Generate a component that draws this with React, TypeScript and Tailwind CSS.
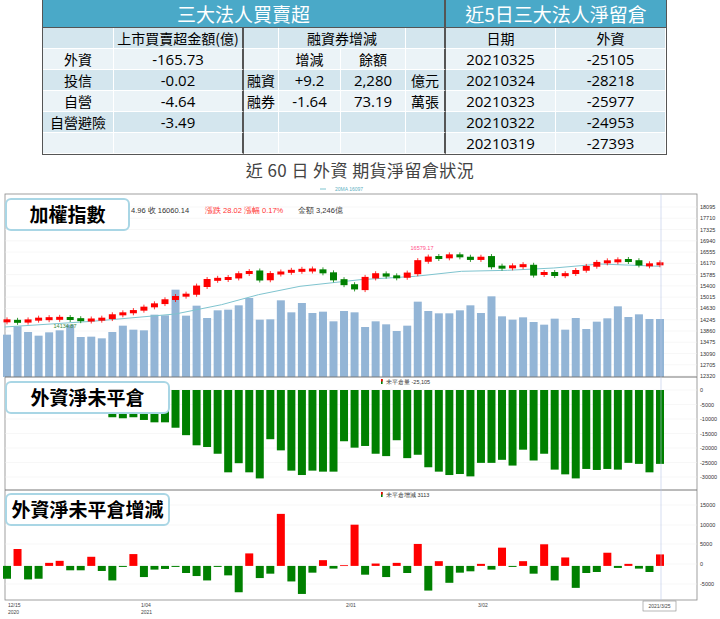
import React from "react";

const N = 63;
const X0 = 7, X1 = 660;
const sp = (X1 - X0) / (N - 1);
const xi = (i: number) => X0 + i * sp;

const volTop = [455,430,447,458,448,442,425,462,461,466,447,428,440,442,395,397,320,398,368,405,382,380,367,345,410,409,352,388,360,390,386,415,384,388,432,415,424,444,428,356,384,391,391,382,367,390,340,400,410,403,417,425,407,440,405,438,416,406,370,402,394,408,408];
const closes = [412,418,410,407,407,405,408,412,410,407,395,390,382,372,362,350,340,333,310,290,288,285,272,265,290,272,268,262,262,260,270,290,305,318,285,272,280,283,270,235,222,225,215,222,230,222,250,255,248,248,275,268,278,272,262,250,238,235,232,233,246,245,240];
const p2 = [0,0,0,0,0,0,0,0,0,0,57,60,57,65,72,72,88,110,140,145,165,220,193,220,238,122,155,215,228,215,218,218,128,147,142,165,172,125,178,168,205,218,228,225,232,192,192,183,200,153,185,165,212,226,238,210,213,210,212,192,195,220,195];
const p3 = [535,447,537,535,488,482,510,510,470,512,540,500,462,530,508,506,500,518,527,540,500,525,575,460,533,520,343,543,580,517,480,505,495,375,523,490,530,488,518,432,570,483,547,517,513,491,508,443,500,483,520,433,540,472,562,518,515,458,503,491,505,515,463];

const ax1 = ["18095","17710","17325","16940","16555","16170","15785","15400","15015","14630","14245","13860","13475","13090","12705","12320"];

function Chart() {
  const RED = "#ff0000", GRN = "#008000";
  const z2 = (v: number) => 185 + v / 3;
  const z3 = (v: number) => 400 + v / 2.96;
  const ma = [[10,432],[200,415],[380,393],[480,365],[560,335],[650,310],[780,290],[900,280],[1000,265],[1100,262],[1200,255],[1300,243],[1430,250]]
    .map(([x, y]) => `${(x * 0.4615).toFixed(1)},${z2(y).toFixed(1)}`).join(" ");
  return (
    <svg width={720} height={433} viewBox="0 186 720 433" className="block" style={{ fontFamily: "'Liberation Sans', sans-serif" }}>
      <line x1={320} y1={191} x2={326} y2={191} stroke="#7fc4cf" strokeWidth={1} />
      <text x={335} y={193} fontSize={5} fill="#5fb0bf">20MA 16097</text>
      <rect x={5} y={196} width={692} height={406} fill="#fff" stroke="#888" strokeWidth={0.8} />
      {ax1.map((t, i) => {
        const y = 209 + i * 11.27;
        return (
          <g key={t}>
            <line x1={5} y1={y} x2={697} y2={y} stroke="#eee" strokeWidth={0.5} />
            <text x={700} y={y + 2} fontSize={5.5} fill="#333">{t}</text>
          </g>
        );
      })}
      {volTop.slice(0, N).map((t, i) => (
        <rect key={i} x={xi(i) - 4} y={z2(t)} width={8} height={379 - z2(t)} fill="#93b5d6" />
      ))}
      <polyline points={ma} fill="none" stroke="#7fc4cf" strokeWidth={1} />
      {closes.slice(0, N).map((c, i) => {
        const o = i === 0 ? c + 3 : closes[i - 1];
        const up = c <= o;
        const mid = (z2(c) + z2(o)) / 2;
        const h = Math.max(Math.abs(z2(c) - z2(o)) * 1.2, 3);
        const top = mid - h / 2;
        const col = up ? RED : GRN;
        return (
          <g key={i}>
            <line x1={xi(i)} x2={xi(i)} y1={top - 2} y2={top + h + 2} stroke={col} strokeWidth={0.8} />
            <rect x={xi(i) - 3.5} y={top} width={7} height={h} fill={col} />
          </g>
        );
      })}
      <text x={422} y={252} fontSize={5.5} fill="#ff4f8b" textAnchor="middle">16579.17</text>
      <text x={65} y={330} fontSize={5.5} fill="#3a8a3a" textAnchor="middle">14134.87</text>
      <text x={131} y={215} fontSize={7.5} fill="#333">4.96 收 16060.14</text>
      <text x={205} y={215} fontSize={7.5} fill="#ff3333">漲跌 28.02 漲幅 0.17%</text>
      <text x={298} y={215} fontSize={7.5} fill="#333">金額 3,246億</text>
      <line x1={5} y1={379} x2={697} y2={379} stroke="#777" strokeWidth={1} />
      {["0","-5000","-10000","-15000","-20000","-25000","-30000"].map((t, i) => {
        const y = 392 + i * 14.5;
        return (
          <g key={t}>
            <line x1={5} y1={y} x2={697} y2={y} stroke="#eee" strokeWidth={0.5} />
            <text x={700} y={y + 2} fontSize={5.5} fill="#333">{t}</text>
          </g>
        );
      })}
      {p2.map((b, i) => b ? (
        <rect key={i} x={xi(i) - 4} y={392} width={8} height={z3(b) - 392} fill={GRN} />
      ) : null)}
      <rect x={381} y={381} width={1.6} height={5} fill={GRN} />
      <rect x={381} y={381} width={1.6} height={2.5} fill={RED} />
      <text x={386} y={386} fontSize={5.5} fill="#333">未平倉量 -25,105</text>
      <line x1={5} y1={492} x2={697} y2={492} stroke="#777" strokeWidth={1} />
      {[["15000",507],["10000",527],["5000",546],["0",566],["-5000",586]].map(([t, y]) => (
        <g key={t as string}>
          <line x1={5} y1={y as number} x2={697} y2={y as number} stroke="#eee" strokeWidth={0.5} />
          <text x={700} y={(y as number) + 2} fontSize={5.5} fill="#333">{t}</text>
        </g>
      ))}
      {p3.slice(0, N).map((v, i) => {
        const y = z3(v), zero = z3(497);
        const up = v < 497;
        return (
          <rect key={i} x={xi(i) - 4} y={Math.min(y, zero)} width={8} height={Math.max(Math.abs(zero - y), 0.8)} fill={up ? RED : GRN} />
        );
      })}
      <rect x={381} y={494} width={1.6} height={5} fill={GRN} />
      <rect x={381} y={494} width={1.6} height={2.5} fill={RED} />
      <text x={386} y={499} fontSize={5.5} fill="#333">未平倉增減 3113</text>
      <line x1={661} y1={196} x2={661} y2={602} stroke="#b8c8e8" strokeWidth={0.6} />
      <text x={8} y={609} fontSize={5} fill="#444">12/15</text>
      <text x={8} y={616} fontSize={5} fill="#444">2020</text>
      <text x={141} y={609} fontSize={5} fill="#444">1/04</text>
      <text x={141} y={616} fontSize={5} fill="#444">2021</text>
      <text x={346} y={609} fontSize={5} fill="#444">2/01</text>
      <text x={478} y={609} fontSize={5} fill="#444">3/02</text>
      <rect x={643} y={603} width={33} height={10} fill="#fff" stroke="#888" strokeWidth={0.6} />
      <text x={659.5} y={610} fontSize={5} fill="#444" textAnchor="middle">2021/3/25</text>
    </svg>
  );
}

function Label({ text, w, top }: { text: string; w: number; top: number }) {
  return (
    <div
      className="absolute left-[5px] h-[33px] rounded-md border-2 border-[#a9d6e5] bg-white flex items-center justify-center text-[19px] font-bold text-black"
      style={{ width: w, top }}
    >
      {text}
    </div>
  );
}

const cell = "flex items-center justify-center border-r border-b border-white h-[21px] whitespace-nowrap";
const cols = "grid grid-cols-[71px_130px_35px_62px_65px_40px_110px_110px]";

export default function App() {
  const rows: string[][] = [
    ["外資", "-165.73", "", "增減", "餘額", "", "20210325", "-25105"],
    ["投信", "-0.02", "融資", "+9.2", "2,280", "億元", "20210324", "-28218"],
    ["自營", "-4.64", "融券", "-1.64", "73.19", "萬張", "20210323", "-25977"],
    ["自營避險", "-3.49", "", "", "", "", "20210322", "-24953"],
    ["", "", "", "", "", "", "20210319", "-27393"],
  ];
  return (
    <div className="w-[720px] h-[619px] bg-white overflow-hidden relative" style={{ fontFamily: "'Noto Sans CJK TC', 'Noto Sans', sans-serif" }}>
      <div className="ml-[42px] w-[625px] border border-t-0 border-[#555] text-[14px] text-black">
        <div className={cols + " bg-[#4aa9c8] text-white text-[19px] h-[27px] leading-[27px]"}>
          <div className="col-span-6 text-center border-r-2 border-[#555]">三大法人買賣超</div>
          <div className="col-span-2 text-center">近5日三大法人淨留倉</div>
        </div>
        <div className={cols + " bg-[#d4e6ee] border-t border-[#555]"}>
          <div className={cell}></div>
          <div className={cell + " border-r-2 border-r-[#555]"}>上市買賣超金額(億)</div>
          <div className={cell}></div>
          <div className={cell + " col-span-2"}>融資券增減</div>
          <div className={cell + " border-r-2 border-r-[#555]"}></div>
          <div className={cell}>日期</div>
          <div className={cell}>外資</div>
        </div>
        {rows.map((r, ri) => (
          <div key={ri} className={cols + " " + (ri % 2 === 0 ? "bg-[#ebf3f7]" : "bg-[#d4e6ee]")}>
            {r.map((c, ci) => (
              <div
                key={ci}
                className={cell + (ci === 1 || ci === 5 ? " border-r-2 border-r-[#555]" : "") + (/^[-+\d]/.test(c) ? " text-[15px]" : "")}
                style={/^[-+\d]/.test(c) ? { fontFamily: "'Open Sans', 'Liberation Sans', sans-serif" } : undefined}
              >
                {c}
              </div>
            ))}
          </div>
        ))}
      </div>
      <div className="h-[29px] flex items-center justify-center text-[17px] text-[#444] tracking-wide">近 60 日 外資 期貨淨留倉狀況</div>
      <Chart />
      <Label text="加權指數" w={125} top={198} />
      <Label text="外資淨未平倉" w={165} top={381} />
      <Label text="外資淨未平倉增減" w={165} top={493} />
    </div>
  );
}
